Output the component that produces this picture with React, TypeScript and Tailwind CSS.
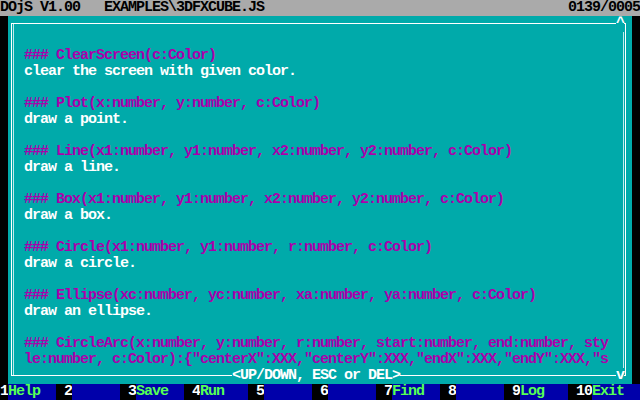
import React from 'react'

const rows: { t: string; h?: boolean }[] = [
  { t: '' },
  { t: '### ClearScreen(c:Color)', h: true },
  { t: 'clear the screen with given color.' },
  { t: '' },
  { t: '### Plot(x:number, y:number, c:Color)', h: true },
  { t: 'draw a point.' },
  { t: '' },
  { t: '### Line(x1:number, y1:number, x2:number, y2:number, c:Color)', h: true },
  { t: 'draw a line.' },
  { t: '' },
  { t: '### Box(x1:number, y1:number, x2:number, y2:number, c:Color)', h: true },
  { t: 'draw a box.' },
  { t: '' },
  { t: '### Circle(x1:number, y1:number, r:number, c:Color)', h: true },
  { t: 'draw a circle.' },
  { t: '' },
  { t: '### Ellipse(xc:number, yc:number, xa:number, ya:number, c:Color)', h: true },
  { t: 'draw an ellipse.' },
  { t: '' },
  { t: '### CircleArc(x:number, y:number, r:number, start:number, end:number, sty', h: true },
  { t: 'le:number, c:Color):{"centerX":XXX,"centerY":XXX,"endX":XXX,"endY":XXX,"s', h: true },
]

const keys = [
  ['1', 'Help'],
  ['2', ''],
  ['3', 'Save'],
  ['4', 'Run'],
  ['5', ''],
  ['6', ''],
  ['7', 'Find'],
  ['8', ''],
  ['9', 'Log'],
  ['10', 'Exit'],
]

const App = () => {
  return (
    <div className="w-[640px] h-[400px] flex flex-col bg-black font-['Liberation_Mono',monospace] text-[15px] tracking-[-1px] leading-4 font-bold whitespace-pre overflow-hidden">
      {/* title bar */}
      <div className="h-4 flex justify-between bg-[#aaaaaa] text-black">
        <span>DOjS V1.00   EXAMPLES\3DFXCUBE.JS</span>
        <span>0139/0005</span>
      </div>

      {/* editor area */}
      <div className="h-[368px] flex px-2">
        <div className="relative flex-1 bg-[#00aaaa] pt-[7px] pl-[3px] pr-[6px] pb-[8px]">
          <div className="h-full border border-white">
            <div className="h-full mx-px border-x border-white/75 pt-2 pl-[10px]">
              {rows.map((r, i) => (
                <div key={i} className={r.h ? 'h-4 text-[#aa00aa]' : 'h-4 text-white'}>
                  {r.t}
                </div>
              ))}
            </div>
          </div>
          <span className="absolute left-[608px] top-0 w-2 h-4 bg-[#00aaaa] text-white">^</span>
          <span className="absolute left-[608px] top-[352px] w-2 h-4 bg-[#00aaaa] text-white">v</span>
          <span className="absolute left-[224px] top-[352px] h-4 bg-[#00aaaa] text-white">&lt;UP/DOWN, ESC or DEL&gt;</span>
        </div>
      </div>

      {/* function keys */}
      <div className="h-4 flex">
        {keys.map(([n, label], i) => (
          <div key={n} className="flex w-16">
            <span className="bg-black text-white">{n}</span>
            <span className="w-12 bg-[#0000aa] text-[#55ff55]">{label}</span>
            {i < keys.length - 1 && <span className="w-2 bg-black" />}
          </div>
        ))}
      </div>
    </div>
  )
}

export default App
